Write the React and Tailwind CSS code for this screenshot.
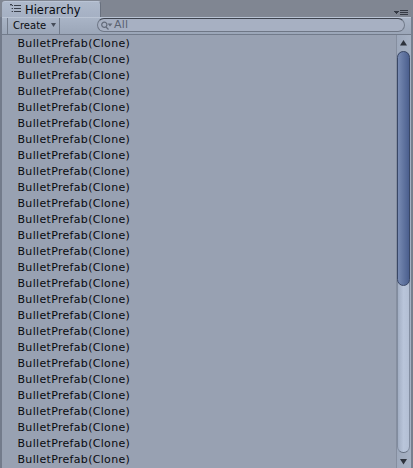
const rows = Array.from({ length: 27 }, (_, i) => i);

function HierarchyIcon() {
  return (
    <svg width="12" height="9" viewBox="0 0 12 9" shapeRendering="crispEdges" fill="#3a404b">
      <path d="M0 0h2v1H0zM4 1h7v1H4zM2 1h1v1H2zM2 4h1v1H2zM4 4h7v1H4zM2 7h1v1H2zM4 7h7v1H4z" />
      <path d="M0 1h2v1H0zM1 4h1v1H1zM1 7h1v1H1z" opacity="0.35" />
    </svg>
  );
}

function Tab() {
  return (
    <div className="mt-px flex h-[16px] w-[99px] items-start rounded-t-[3px] border-t border-r border-t-[#bac4d5] border-r-[#69717f] bg-linear-to-b from-[#aeb9cb] to-[#a5b0c3]">
      <div className="mt-[2px] ml-[8px] flex w-[15px]">
        <HierarchyIcon />
      </div>
      <span className="mt-px text-[11.5px] leading-[15px] text-[#090b10]">Hierarchy</span>
    </div>
  );
}

function Toolbar() {
  return (
    <div className="flex h-[18px] shrink-0 border-t border-b border-t-[#bac4d4] border-b-[#727b8b] bg-linear-to-b from-[#a9b4c6] to-[#9ba6b8]">
      <div className="ml-[5px] flex w-[53px] border-r border-l border-[#727b8b] pl-[5px]">
        <span className="w-[38px] text-[10px] leading-[16px] text-[#090b10]">Create</span>
        <svg className="mt-[5px]" width="5" height="4" fill="#454c59">
          <path d="M0 0h5L2.5 4z" />
        </svg>
      </div>
      <div className="ml-[37px] flex h-[14px] w-[308px] rounded-full border border-t-[#3e444f] border-r-[#727b8a] border-b-[#6f7786] border-l-[#6f7786] bg-[#a7b0c2] pl-[3px]">
        <svg className="mt-[2px]" width="13" height="10" fill="none" stroke="#636b7a" strokeWidth="1.2">
          <circle cx="3.3" cy="3.8" r="2.6" />
          <path d="M5 6l2.5 2.5" />
          <path d="M6.5 2.5h5L9 5.5z" fill="#636b7a" stroke="none" />
        </svg>
        <span className="text-[11px] leading-[12px] tracking-[0.2px] text-[#5a6271]">All</span>
      </div>
    </div>
  );
}

function Scrollbar() {
  return (
    <div className="flex w-[15px] shrink-0 flex-col border-l border-[#858e9f] bg-linear-to-r from-[#9da8bb] to-[#a6b1c3]">
      <svg className="mt-[5px] ml-[3px] shrink-0" width="7" height="6" fill="#2d323c">
        <path d="M3.5 0L7 5.5H0z" />
      </svg>
      <div className="mt-[5px] h-[402px] w-[13px] shrink-0 rounded-full border border-[#818c9f] border-b-[#636d7e] bg-linear-to-r from-[#a2aec3] via-[#b9c5da] to-[#b3bfd4]">
        <div className="-mx-px -mt-px h-[235px] rounded-full border border-[#394766] bg-linear-to-r from-[#788bb3] to-[#4b5f8e]" />
      </div>
      <svg className="mt-[6px] ml-[3px] shrink-0" width="7" height="6" fill="#2d323c">
        <path d="M0 0h7L3.5 5.5z" />
      </svg>
    </div>
  );
}

export default function App() {
  return (
    <div className="flex h-[468px] w-[413px] flex-col overflow-hidden bg-[#808692] font-['DejaVu_Sans',sans-serif]">
      <div className="flex h-[17px] shrink-0 justify-between pl-[2px]">
        <Tab />
        <svg className="mt-[8px] mr-[5px]" width="14" height="7" shapeRendering="crispEdges" fill="#353a44">
          <path d="M0 3h5v1H0zM1 4h3v1H1zM2 5h1v1H2zM6 2h8v1H6zM6 4h8v1H6zM6 6h8v1H6z" />
        </svg>
      </div>
      <div className="flex min-h-0 flex-1 flex-col border-r-2 border-l-2 border-r-[#777f8e] border-l-[#737b8b] bg-[#98a1b2]">
        <Toolbar />
        <div className="flex min-h-0 flex-1">
          <ul className="flex-1">
            {rows.map((i) => (
              <li key={i} className="h-[16px] pl-[15.5px] text-[11px] leading-[17px] tracking-[0.32px] text-[#080a0e]">
                BulletPrefab(Clone)
              </li>
            ))}
          </ul>
          <Scrollbar />
        </div>
      </div>
    </div>
  );
}
